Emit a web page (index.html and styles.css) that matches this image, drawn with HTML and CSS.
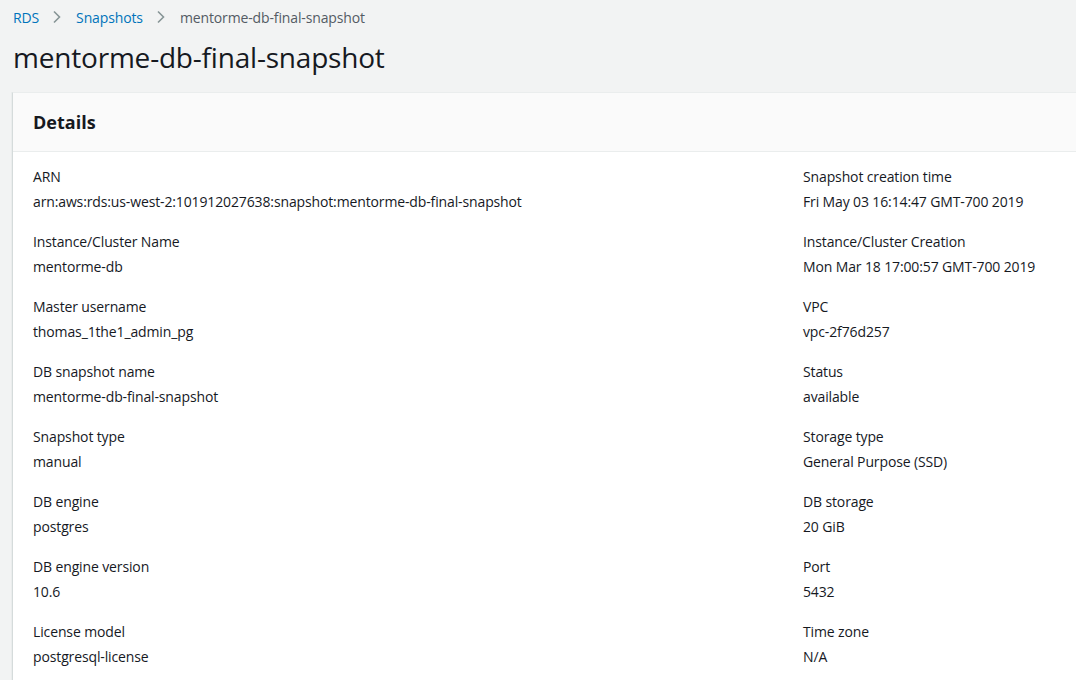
FILE: index.html
```html
<!DOCTYPE html>
<html>
<head>
<meta charset="utf-8">
<link rel="stylesheet" href="styles.css">
</head>
<body>
<nav class="crumbs">
  <a class="crumb-link">RDS</a>
  <svg class="chev" width="10" height="14" viewBox="0 0 10 14"><path d="M2 1.5 L7.5 7 L2 12.5" fill="none" stroke="#879596" stroke-width="1.6"/></svg>
  <a class="crumb-link">Snapshots</a>
  <svg class="chev" width="10" height="14" viewBox="0 0 10 14"><path d="M2 1.5 L7.5 7 L2 12.5" fill="none" stroke="#879596" stroke-width="1.6"/></svg>
  <span class="crumb-current">mentorme-db-final-snapshot</span>
</nav>
<h1 class="title">mentorme-db-final-snapshot</h1>
<section class="card">
  <header class="card-head"><h2>Details</h2></header>
  <div class="card-body">
    <div class="item"><div class="label">ARN</div><div class="value">arn:aws:rds:us-west-2:101912027638:snapshot:mentorme-db-final-snapshot</div></div>
    <div class="item"><div class="label">Snapshot creation time</div><div class="value">Fri May 03 16:14:47 GMT-700 2019</div></div>
    <div class="item"><div class="label">Instance/Cluster Name</div><div class="value">mentorme-db</div></div>
    <div class="item"><div class="label">Instance/Cluster Creation</div><div class="value">Mon Mar 18 17:00:57 GMT-700 2019</div></div>
    <div class="item"><div class="label">Master username</div><div class="value">thomas_1the1_admin_pg</div></div>
    <div class="item"><div class="label">VPC</div><div class="value">vpc-2f76d257</div></div>
    <div class="item"><div class="label">DB snapshot name</div><div class="value">mentorme-db-final-snapshot</div></div>
    <div class="item"><div class="label">Status</div><div class="value">available</div></div>
    <div class="item"><div class="label">Snapshot type</div><div class="value">manual</div></div>
    <div class="item"><div class="label">Storage type</div><div class="value">General Purpose (SSD)</div></div>
    <div class="item"><div class="label">DB engine</div><div class="value">postgres</div></div>
    <div class="item"><div class="label">DB storage</div><div class="value">20 GiB</div></div>
    <div class="item"><div class="label">DB engine version</div><div class="value">10.6</div></div>
    <div class="item"><div class="label">Port</div><div class="value">5432</div></div>
    <div class="item"><div class="label">License model</div><div class="value">postgresql-license</div></div>
    <div class="item"><div class="label">Time zone</div><div class="value">N/A</div></div>
  </div>
</section>
</body>
</html>
```
FILE: styles.css
```css
html, body {
  margin: 0;
  padding: 0;
  background: #f2f3f3;
  overflow: hidden;
  height: 680px;
}
body {
  font-family: "Open Sans", "Liberation Sans", sans-serif;
  color: #16191f;
  font-size: 14px;
  letter-spacing: -0.13px;
}
.crumbs {
  display: flex;
  align-items: center;
  height: 34px;
  padding-left: 13px;
}
.crumb-link {
  color: #0073bb;
  font-size: 14px;
}
.chev {
  margin: 0 14px 0 13px;
}
.crumb-current {
  color: #545b64;
  font-size: 14px;
}
.title {
  margin: 0;
  padding-left: 13px;
  font-size: 28px;
  font-weight: 400;
  letter-spacing: -0.2px;
  line-height: 40px;
  color: #16191f;
  height: 58px;
  box-sizing: border-box;
  padding-top: 3px;
}
.card {
  margin-left: 12px;
  background: #fff;
  border-top: 1px solid #eaeded;
  border-left: 1px solid #d5dbdb;
  box-shadow: -1px 0 0 #eaeded;
}
.card-head {
  background: #fafafa;
  border-bottom: 1px solid #eaeded;
  height: 58px;
  display: flex;
  align-items: center;
  padding-left: 20px;
}
.card-head h2 {
  margin: 0;
  font-size: 18px;
  font-weight: 700;
  letter-spacing: 0;
  color: #16191f;
}
.card-body {
  display: grid;
  grid-template-columns: 770px 1fr;
  padding: 14px 0 0 20px;
}
.item {
  height: 65px;
}
.label {
  line-height: 22px;
  color: #16191f;
}
.value {
  line-height: 22px;
  margin-top: 3px;
  color: #16191f;
}
```
